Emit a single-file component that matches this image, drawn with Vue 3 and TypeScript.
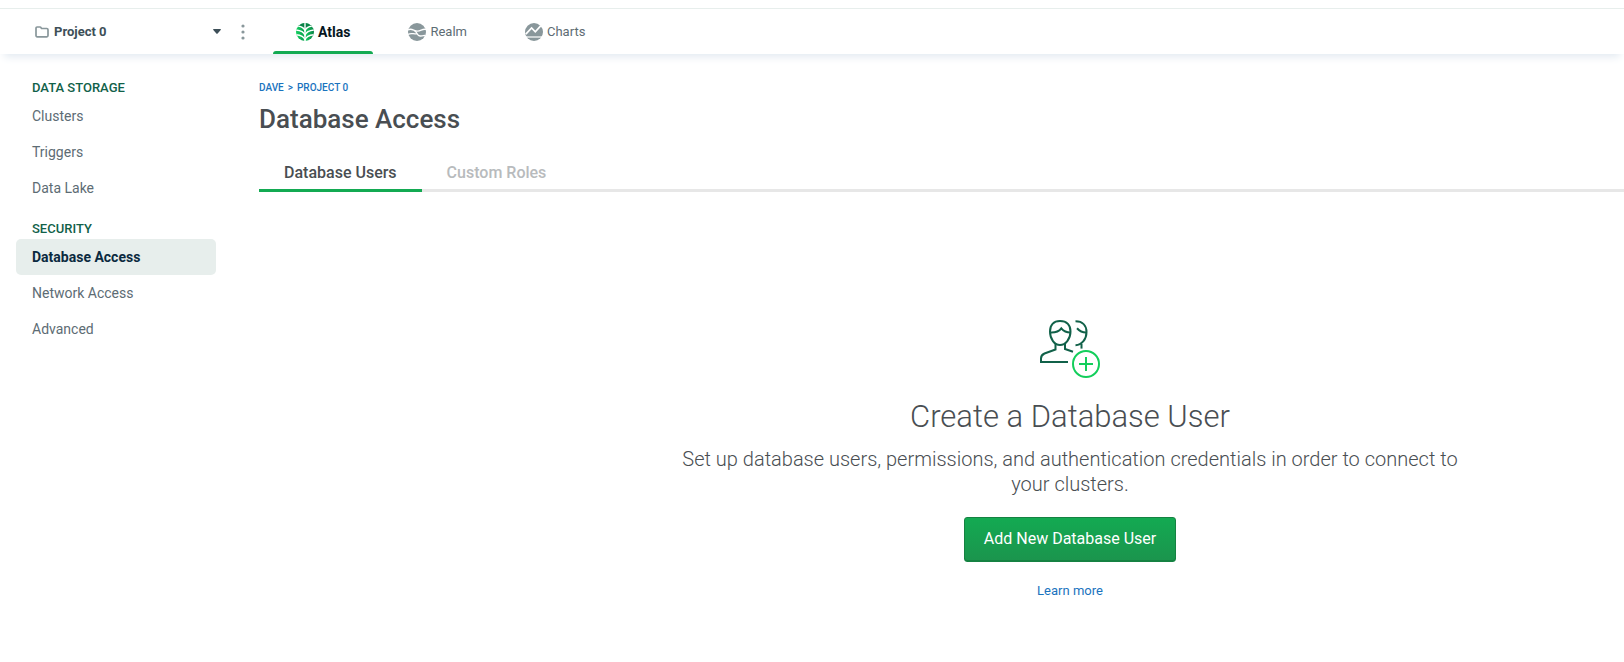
<script setup lang="ts">
import { ref } from 'vue'

interface NavSection {
  title: string
  items: string[]
}

const project = ref('Project 0')
const activeItem = ref('Database Access')
const activeTab = ref('Database Users')
const tabs = ['Database Users', 'Custom Roles']
const sections: NavSection[] = [
  { title: 'Data Storage', items: ['Clusters', 'Triggers', 'Data Lake'] },
  { title: 'Security', items: ['Database Access', 'Network Access', 'Advanced'] },
]
</script>

<template>
  <div class="app">
    <header class="topbar">
      <div class="project">
        <label class="picker">
          <svg class="folder" width="14" height="12" viewBox="0 0 14 12" aria-hidden="true">
            <path d="M1 9.600V2.200Q1 1 2.200 1h2.900q.5 0 .8.5l.7 1h5.200q1.200 0 1.200 1.200v5.900q0 1.200-1.200 1.200H2.200Q1 10.800 1 9.600z" fill="none" stroke="#89979b" stroke-width="1.700" stroke-linejoin="round" />
          </svg>
          <select v-model="project" class="select" aria-label="Project">
            <option>Project 0</option>
          </select>
          <svg class="caret" width="8" height="5" viewBox="0 0 8 5" aria-hidden="true">
            <path d="M.5 0h7q.6.300.2.900L4.600 4.600q-.6.600-1.200 0L.3.900Q-.1.300.5 0z" fill="#3d4f58" />
          </svg>
        </label>
        <button class="more" type="button" aria-label="Project options">
          <svg width="4" height="16" viewBox="0 0 4 16" aria-hidden="true" fill="#89979b">
            <circle cx="2" cy="2" r="1.600" />
            <circle cx="2" cy="8" r="1.600" />
            <circle cx="2" cy="14" r="1.600" />
          </svg>
        </button>
      </div>
      <nav class="products" aria-label="Products">
        <a class="product current" href="#atlas" aria-current="page">
          <svg width="18" height="18" viewBox="0 0 18 18" aria-hidden="true">
            <defs>
              <clipPath id="disc"><circle cx="9" cy="9" r="9" /></clipPath>
              <linearGradient id="leafL" x1="0" y1="0" x2="1" y2="0">
                <stop offset="0" stop-color="#13d15f" />
                <stop offset="1" stop-color="#0b9a4e" />
              </linearGradient>
              <linearGradient id="leafR" x1="0" y1="0" x2="1" y2="0">
                <stop offset="0" stop-color="#12cf5e" />
                <stop offset="1" stop-color="#0a8247" />
              </linearGradient>
            </defs>
            <g clip-path="url(#disc)">
              <rect width="9" height="18" fill="url(#leafL)" />
              <rect x="9" width="9" height="18" fill="url(#leafR)" />
              <path d="M0 0h18v3Q10.500 4 9 7.600Q7.500 4 0 3z" fill="#0b8248" />
              <g fill="none" stroke="#fff" stroke-width="1.400">
                <path d="M9 0v18" />
                <path d="M2 3Q7.800 4 9 7.600Q10.200 4 16 3" />
                <path d="M-.5 7Q7.500 7.800 9 12.200Q10.500 7.800 18.500 7" />
                <path d="M0 11.800Q7.600 12.400 9 17Q10.400 12.400 18 11.800" />
              </g>
            </g>
          </svg>
          Atlas
        </a>
        <a class="product" href="#realm">
          <svg width="18" height="18" viewBox="0 0 18 18" aria-hidden="true">
            <circle cx="9" cy="9" r="9" fill="#89979b" />
            <g fill="none" stroke="#fff" stroke-width="1.300">
              <path d="M0 7C3.500 4.500 6 8.300 9.500 8.100S14.500 5.500 18 6.400" />
              <path d="M0 11.500C3 9.400 6 11.600 9 10.600" />
              <path d="M6.500 8C9.500 8.500 8.500 12.800 12 13S15.500 12.200 17.500 12.600" />
            </g>
          </svg>
          Realm
        </a>
        <a class="product" href="#charts">
          <svg width="18" height="18" viewBox="0 0 18 18" aria-hidden="true">
            <circle cx="9" cy="9" r="9" fill="#89979b" />
            <path d="M.8 11.200 6.600 5l3.700 3.800 5.600-6.200" fill="none" stroke="#fff" stroke-width="1.700" />
            <path d="M0 14h18" stroke="#fff" stroke-width="1.200" />
          </svg>
          Charts
        </a>
      </nav>
    </header>

    <div class="body">
      <nav class="sidebar" aria-label="Project navigation">
        <section v-for="section in sections" :key="section.title" class="group">
          <h2 class="group-title">{{ section.title }}</h2>
          <a
            v-for="item in section.items"
            :key="item"
            href="#"
            class="item"
            :class="{ active: item === activeItem }"
            @click.prevent="activeItem = item"
          >{{ item }}</a>
        </section>
      </nav>

      <main class="main">
        <div class="crumbs">
          <a href="#dave">Dave</a>
          <span>&gt;</span>
          <a href="#project">Project 0</a>
        </div>
        <h1 class="title">Database Access</h1>
        <div class="tabs" role="tablist">
          <button
            v-for="tab in tabs"
            :key="tab"
            type="button"
            role="tab"
            class="tab"
            :class="{ selected: tab === activeTab }"
            :aria-selected="tab === activeTab"
            @click="activeTab = tab"
          >{{ tab }}</button>
        </div>

        <section class="empty">
          <svg width="60" height="58" viewBox="0 0 60 58" aria-hidden="true" fill="none" stroke-width="2">
            <g stroke="#116149">
              <path d="M20 1C13.500 1 10 5.500 10 11.500C10 19 14.500 25 20 25S30.500 19 30.500 11.500C30.500 5.500 27 1 20 1z" />
              <path d="M10 12.500C15 12.800 19 11.500 21.300 8.300C23.500 11 26.500 12.500 30.500 12.500" />
              <path d="M15.500 23v6.500L4.500 33.500Q1 35 1 38.500V42H28" />
              <path d="M25 23v6L33 31.800" />
              <path d="M35.500 1.300C43 1.300 46.500 6 46.500 12C46.500 19 42 25 35.500 25.200" />
              <path d="M37 8.300C39.500 11 42.500 12.500 46 12.500" />
              <path d="M41.500 24v4.600" />
            </g>
            <g stroke="#13ce5b">
              <circle cx="46" cy="44" r="13" />
              <path d="M46 37v14M39 44h14" />
            </g>
          </svg>
          <h2 class="empty-title">Create a Database User</h2>
          <p class="empty-text">
            Set up database users, permissions, and authentication credentials in order to connect to your clusters.
          </p>
          <button class="primary" type="button">Add New Database User</button>
          <a class="learn" href="#learn">Learn more</a>
        </section>
      </main>
    </div>
  </div>
</template>

<style>
body {
  margin: 0;
  background: #fff;
}
</style>

<style scoped>
.app {
  box-sizing: border-box;
  min-height: 100vh;
  padding-top: 8px;
  overflow: hidden;
  font-family: Roboto, "Liberation Sans", sans-serif;
  font-size: 14px;
  line-height: 20px;
  color: #3d4f58;
}
a {
  color: #1a73be;
  text-decoration: none;
}
button {
  padding: 0;
  border: 0;
  background: none;
  font: inherit;
  cursor: pointer;
}
.topbar {
  display: flex;
  height: 45px;
  border-top: 1px solid #e7eeec;
  box-shadow: 0 7px 8px -4px #e3eaf1;
}
.project {
  box-sizing: border-box;
  display: flex;
  flex: none;
  align-items: center;
  gap: 20px;
  width: 273px;
  padding-left: 35px;
}
.picker {
  display: flex;
  align-items: center;
  gap: 5px;
  width: 186px;
}
.select {
  flex: 1;
  min-width: 0;
  padding: 0;
  border: 0;
  background: none;
  appearance: none;
  font: 700 13px/20px Roboto, "Liberation Sans", sans-serif;
  color: #3d4f58;
}
.more {
  display: flex;
}
.products {
  display: flex;
  gap: 12px;
}
.product {
  display: flex;
  align-items: center;
  gap: 4px;
  padding: 0 23px;
  font-size: 13px;
  color: #5d6c74;
}
.product.current {
  position: relative;
  font-size: 14px;
  font-weight: 700;
  color: #061621;
}
.product.current::after {
  content: "";
  position: absolute;
  right: 0;
  bottom: 0;
  left: 0;
  height: 3px;
  border-radius: 3px 3px 0 0;
  background: #13aa52;
}
.body {
  display: flex;
}
.sidebar {
  flex: none;
  width: 200px;
  padding: 24px 43px 0 16px;
}
.group + .group {
  margin-top: 13px;
}
.group-title {
  margin: 0;
  padding-left: 16px;
  font-size: 13px;
  font-weight: 500;
  line-height: 20px;
  text-transform: uppercase;
  color: #116149;
}
.item {
  display: block;
  padding: 8px 16px;
  border-radius: 5px;
  color: #5d6c74;
}
.item.active {
  background: #e7eeec;
  font-weight: 700;
  color: #0b2a40;
}
.main {
  flex: 1;
  min-width: 0;
  padding-top: 26px;
}
.crumbs {
  display: flex;
  gap: 4px;
  font-size: 10px;
  font-weight: 500;
  line-height: 16px;
  text-transform: uppercase;
  color: #1a73be;
}
.title {
  margin: 7px 0 14px;
  font-size: 26px;
  font-weight: 500;
  line-height: 32px;
  color: #494e52;
}
.tabs {
  display: flex;
  border-bottom: 3px solid #e7e7e7;
}
.tab {
  margin-bottom: -3px;
  padding: 12px 25px 4px;
  border-bottom: 3px solid transparent;
  font-size: 16px;
  font-weight: 500;
  line-height: 24px;
  color: #b8bbbd;
}
.tab.selected {
  border-bottom-color: #13aa52;
  color: #494e52;
}
.empty {
  display: flex;
  flex-direction: column;
  align-items: center;
  padding: 128px 0 40px 257px;
  text-align: center;
}
.empty-title {
  margin: 19px 0 10px;
  font-size: 31px;
  font-weight: 300;
  line-height: 40px;
  color: #494e52;
}
.empty-text {
  max-width: 800px;
  margin: 0 0 20px;
  font-size: 20px;
  font-weight: 300;
  line-height: 25px;
  color: #494e52;
}
.primary {
  margin-bottom: 19px;
  padding: 9px 19px 10px;
  border: 1px solid #158242;
  border-radius: 3px;
  background: linear-gradient(#13aa52, #1b944d);
  box-shadow: inset 0 -1px #158242;
  font-size: 16px;
  line-height: 24px;
  color: #fff;
}
.learn {
  font-size: 13px;
}
</style>
